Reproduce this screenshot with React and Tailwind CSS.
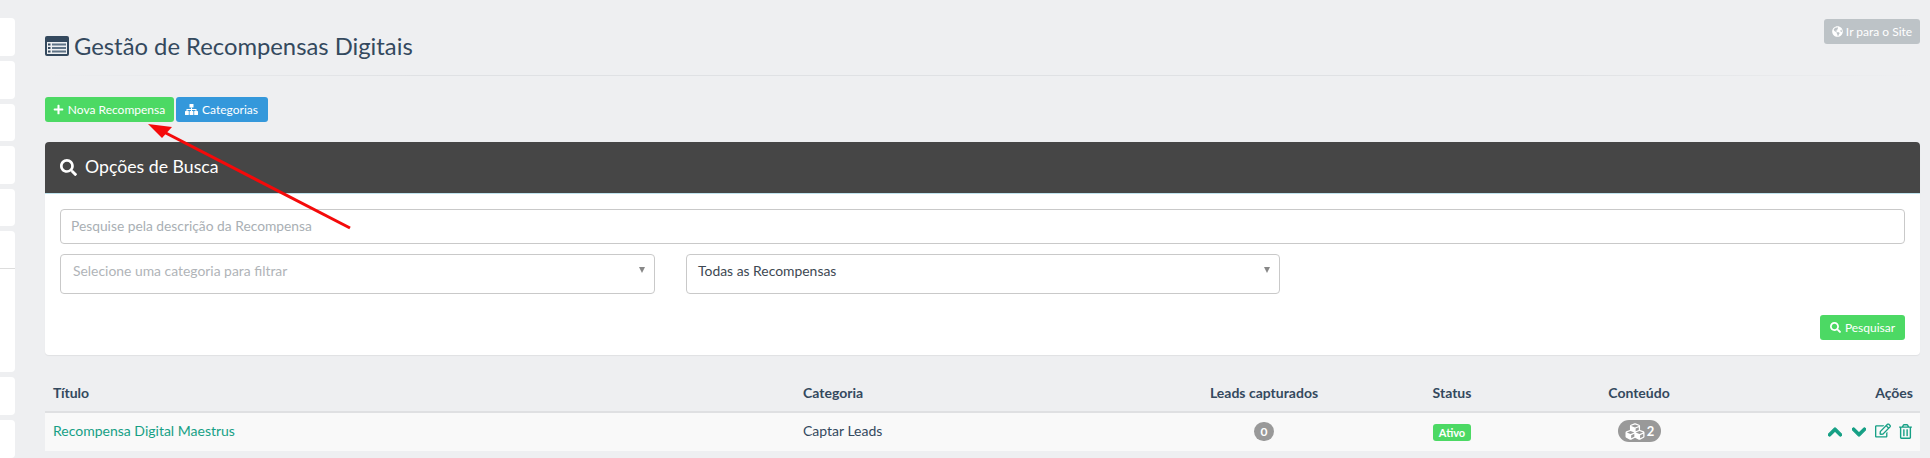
import React from "react";
import { FaPlus, FaSearch, FaGlobeAmericas, FaCubes, FaChevronUp, FaChevronDown, FaRegEdit, FaRegTrashAlt } from "react-icons/fa";

const stubs = ["h-[38px]", "h-[38px]", "h-[37px]", "h-[38px]", "h-[38px]"];

function ListAltIcon() {
  return (
    <svg className="mr-[5px] shrink-0" width="24" height="20" viewBox="0 0 24 20">
      <rect width="24" height="20" rx="2" fill="#34495e" />
      <rect x="2" y="6" width="20" height="12" fill="#eef0f2" />
      <rect x="3" y="7.5" width="2.5" height="2" fill="#34495e" />
      <rect x="3" y="11" width="2.5" height="2" fill="#34495e" />
      <rect x="3" y="14.5" width="2.5" height="2" fill="#34495e" />
      <rect x="7" y="7.5" width="14" height="2" fill="#5f7386" />
      <rect x="7" y="11" width="14" height="2" fill="#5f7386" />
      <rect x="7" y="14.5" width="14" height="2" fill="#5f7386" />
    </svg>
  );
}

function SitemapIcon() {
  return (
    <svg width="13" height="11" viewBox="0 0 13 11" fill="currentColor">
      <rect x="4.5" y="0" width="4" height="3.5" rx="0.5" />
      <path d="M6 3.5h1V5h4.5v2h-1V6H7v1H6V6H2.5v1h-1V5H6z" />
      <rect x="0" y="7" width="3.8" height="4" rx="0.5" />
      <rect x="4.6" y="7" width="3.8" height="4" rx="0.5" />
      <rect x="9.2" y="7" width="3.8" height="4" rx="0.5" />
    </svg>
  );
}

function Select({ label, className }) {
  return (
    <div className={`relative h-[40px] rounded-[4px] border border-[#c9c9c9] bg-white pt-[6px] text-[13.9px] leading-[20px] ${className}`}>
      {label}
      <span className="absolute right-[9px] top-[12px] h-0 w-0 border-x-[3.5px] border-t-[6px] border-x-transparent border-t-[#888888]" />
    </div>
  );
}

export default function App() {
  return (
    <div className="relative flex h-[458px] w-[1930px] overflow-hidden bg-[#eeeff1] font-['Lato','Noto_Sans',sans-serif] text-[#34495e]">
      <aside className="flex w-[15px] shrink-0 flex-col gap-[5px] pt-[18px]">
        {stubs.map((h, i) => (
          <div key={i} className={`${h} rounded-r-[4px] bg-white`} />
        ))}
        <div className="h-[141px] rounded-r-[4px] bg-white pt-[37px]">
          <div className="h-px bg-[#dddddd]" />
        </div>
        <div className="h-[38px] rounded-r-[4px] bg-white" />
        <div className="h-[38px] rounded-r-[4px] bg-white" />
      </aside>

      <main className="ml-[30px] w-[1875px] shrink-0">
        <header className="relative h-[76px] border-b border-[#e3e5e8] [border-image:linear-gradient(to_right,#eeeff1,#dfe1e4_20%,#dfe1e4_80%,#eeeff1)_1]">
          <h1 className="flex items-center pt-[30px] text-[23.8px] leading-[32px] font-normal text-[#34495e]">
            <ListAltIcon />
            Gestão de Recompensas Digitais
          </h1>
          <a className="absolute right-0 top-[19px] flex h-[25px] w-[96px] items-center justify-center gap-[3px] rounded-[3px] bg-[#bdc3c7] text-[12px] text-white">
            <FaGlobeAmericas className="h-[11px] w-[11px]" />
            Ir para o Site
          </a>
        </header>

        <div className="mt-[21px] flex gap-[2px]">
          <button className="flex h-[25px] w-[129px] items-center justify-center gap-[4px] rounded-[3px] bg-[#4cd964] pr-[1px] text-[12px] text-white">
            <FaPlus className="h-[11px] w-[11px]" />
            Nova Recompensa
          </button>
          <button className="flex h-[25px] w-[92px] items-center justify-center gap-[4px] rounded-[3px] bg-[#3498db] pr-[1px] text-[12px] text-white">
            <SitemapIcon />
            Categorias
          </button>
        </div>

        <section className="mt-[20px] h-[213px] rounded-[4px] bg-white shadow-[0_1px_1px_rgba(0,0,0,0.06)]">
          <div className="flex h-[52px] items-center rounded-t-[4px] border-b border-[#bfe3ee] bg-[#464646] pl-[15px] text-[17.7px] text-white">
            <FaSearch className="mr-[8px] h-[17px] w-[17px]" />
            Opções de Busca
          </div>
          <div className="px-[15px] pt-[15px]">
            <div className="h-[35px] rounded-[4px] border border-[#c9c9c9] pl-[10px] text-[13.8px] leading-[31px] text-[#a9afb4]">
              Pesquise pela descrição da Recompensa
            </div>
            <div className="mt-[10px] flex gap-[31px]">
              <Select label="Selecione uma categoria para filtrar" className="w-[595px] pl-[12px] text-[#b0b4b8]" />
              <Select label="Todas as Recompensas" className="w-[594px] pl-[11px] text-[#3d4852]" />
            </div>
            <div className="mt-[21px] flex justify-end">
              <button className="flex h-[25px] w-[85px] items-center justify-center gap-[4px] rounded-[3px] bg-[#4cd964] text-[12px] text-white">
                <FaSearch className="h-[11px] w-[11px]" />
                Pesquisar
              </button>
            </div>
          </div>
        </section>

        <table className="mt-[18px] w-full table-fixed border-collapse text-[14px]">
          <colgroup>
            <col className="w-[750px]" />
            <col className="w-[355px]" />
            <col className="w-[228px]" />
            <col className="w-[148px]" />
            <col className="w-[226px]" />
            <col className="w-[168px]" />
          </colgroup>
          <thead>
            <tr className="h-[39px] border-b-2 border-[#dfe0e2] font-bold text-[#34495e]">
              <th className="pl-[8px] text-left font-bold">Título</th>
              <th className="pl-[8px] text-left font-bold">Categoria</th>
              <th className="text-center font-bold">Leads capturados</th>
              <th className="text-center font-bold">Status</th>
              <th className="text-center font-bold">Conteúdo</th>
              <th className="pr-[7px] text-right font-bold">Ações</th>
            </tr>
          </thead>
          <tbody>
            <tr className="h-[39px] bg-[#f9f9f9]">
              <td className="pb-[3px] pl-[8px] text-[#16a085]">Recompensa Digital Maestrus</td>
              <td className="pb-[3px] pl-[8px] text-[#34495e]">Captar Leads</td>
              <td className="pb-[3px] text-center">
                <span className="inline-block h-[19px] w-[20px] rounded-full bg-[#999999] text-center text-[12px] font-bold leading-[19px] text-white">0</span>
              </td>
              <td className="pb-[1px] text-center">
                <span className="inline-block h-[17px] w-[38px] rounded-[3px] bg-[#4cd964] text-center text-[11px] font-bold leading-[17px] text-white">Ativo</span>
              </td>
              <td className="pt-[2px] text-center">
                <span className="inline-flex h-[22px] w-[43px] items-center justify-center gap-[1px] rounded-full bg-[#999999] text-[13px] font-bold text-white">
                  <FaCubes className="h-[19px] w-[22px]" />2
                </span>
              </td>
              <td className="pr-[8px]">
                <div className="flex items-center justify-end text-[#16a085]">
                  <FaChevronUp className="h-[16px] w-[14px] stroke-[#16a085] stroke-[40]" />
                  <FaChevronDown className="ml-[10px] h-[16px] w-[14px] stroke-[#16a085] stroke-[40]" />
                  <FaRegEdit className="ml-[9px] h-[15px] w-[16px] -translate-y-[2px]" />
                  <FaRegTrashAlt className="ml-[8px] h-[15px] w-[13px] -translate-y-[1px]" />
                </div>
              </td>
            </tr>
          </tbody>
        </table>
      </main>

      <svg className="pointer-events-none absolute left-0 top-0" width="1930" height="458">
        <line x1="350" y1="228" x2="160" y2="130" stroke="#f40a0a" strokeWidth="3" />
        <polygon points="148,124 172,127 162,138" fill="#f40a0a" />
      </svg>
    </div>
  );
}
